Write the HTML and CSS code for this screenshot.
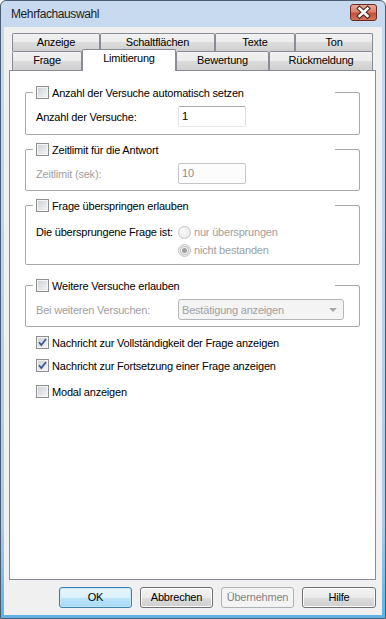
FILE: index.html
```html
<!DOCTYPE html>
<html lang="de">
<head>
    <meta charset="UTF-8">
    <title>Mehrfachauswahl</title>
    <link rel="stylesheet" href="styles.css">
</head>
<body>
    <div class="window">
        <div class="titlebar">
            <span class="title">Mehrfachauswahl</span>
            <div class="close-btn">
                <svg width="27" height="17" viewBox="0 0 27 17">
                    <path d="M9.5 4.5 L17.5 12 M17.5 4.5 L9.5 12" stroke="#4b1f1a" stroke-width="4.6" stroke-linecap="square"/>
                    <path d="M9.5 4.5 L17.5 12 M17.5 4.5 L9.5 12" stroke="#ffffff" stroke-width="2.6" stroke-linecap="square"/>
                </svg>
            </div>
        </div>

        <div class="client">
            <!-- Reiter in zwei Reihen -->
            <div class="tabs">
                <div class="tab-row">
                    <div class="tab w-anzeige">Anzeige</div>
                    <div class="tab w-schalt">Schaltflächen</div>
                    <div class="tab w-texte">Texte</div>
                    <div class="tab w-ton">Ton</div>
                </div>
                <div class="tab-row front">
                    <div class="tab w-frage">Frage</div>
                    <div class="tab w-limit active">Limitierung</div>
                    <div class="tab w-bewert">Bewertung</div>
                    <div class="tab w-rueck">Rückmeldung</div>
                </div>
            </div>

            <div class="panel">
                <div class="group g-first">
                    <div class="legend"><span class="cb"></span>Anzahl der Versuche automatisch setzen</div>
                    <div class="field-row">
                        <span class="field-label">Anzahl der Versuche:</span>
                        <div class="textbox">1</div>
                    </div>
                </div>

                <div class="group g-second">
                    <div class="legend"><span class="cb"></span>Zeitlimit für die Antwort</div>
                    <div class="field-row disabled">
                        <span class="field-label">Zeitlimit (sek):</span>
                        <div class="textbox">10</div>
                    </div>
                </div>

                <div class="group g-third">
                    <div class="legend"><span class="cb"></span>Frage überspringen erlauben</div>
                    <div class="radio-block">
                        <span class="field-label">Die übersprungene Frage ist:</span>
                        <div class="radios">
                            <div class="radio-row"><span class="rb"></span>nur übersprungen</div>
                            <div class="radio-row"><span class="rb checked"><span class="dot"></span></span>nicht bestanden</div>
                        </div>
                    </div>
                </div>

                <div class="group g-fourth">
                    <div class="legend"><span class="cb"></span>Weitere Versuche erlauben</div>
                    <div class="field-row disabled">
                        <span class="field-label">Bei weiteren Versuchen:</span>
                        <div class="combo">Bestätigung anzeigen<span class="arrow"></span></div>
                    </div>
                </div>

                <div class="check-row r1">
                    <span class="cb">
                        <svg width="11" height="11" viewBox="0 0 11 11"><path d="M2 5.2 L4.3 8 L9 2" fill="none" stroke="#3d5a8f" stroke-width="1.8"/></svg>
                    </span>Nachricht zur Vollständigkeit der Frage anzeigen
                </div>
                <div class="check-row r2">
                    <span class="cb">
                        <svg width="11" height="11" viewBox="0 0 11 11"><path d="M2 5.2 L4.3 8 L9 2" fill="none" stroke="#3d5a8f" stroke-width="1.8"/></svg>
                    </span>Nachricht zur Fortsetzung einer Frage anzeigen
                </div>
                <div class="check-row r3"><span class="cb"></span>Modal anzeigen</div>
            </div>

            <div class="buttons">
                <div class="btn default">OK</div>
                <div class="btn">Abbrechen</div>
                <div class="btn disabled">Übernehmen</div>
                <div class="btn hilfe">Hilfe</div>
            </div>
        </div>
    </div>
</body>
</html>
```

FILE: styles.css
```css
body {
    margin: 0;
    font-family: "Liberation Sans", Arial, sans-serif;
    font-size: 11px;
    letter-spacing: -0.2px;
    color: #000;
}

.window {
    box-sizing: border-box;
    width: 386px;
    height: 619px;
    border: 1px solid #4b5d73;
    border-radius: 6px 6px 0 0;
    background: linear-gradient(to bottom, #c8daef 0%, #bcd2eb 40%, #a9cbe9 85%, #5fb2e4 100%);
    padding: 0 3px 3px;
    display: flex;
    flex-direction: column;
}

.titlebar {
    height: 26px;
    flex: none;
    display: flex;
    justify-content: space-between;
    align-items: flex-start;
    padding: 0 5px 0 7px;
}

.title {
    font-size: 12px;
    letter-spacing: -0.4px;
    line-height: 26px;
    color: #1e1e1e;
}

.close-btn {
    margin-top: 3px;
    width: 27px;
    height: 17px;
    box-sizing: border-box;
    border: 1px solid #6b2b25;
    border-radius: 3px;
    background: linear-gradient(to bottom, #e9a99a 0%, #d9826e 45%, #c7503a 55%, #d1765f 100%);
    display: flex;
    align-items: center;
    justify-content: center;
}

.close-btn svg {
    display: block;
    margin: -1px;
}

.client {
    flex: 1;
    background: #f0f0f0;
    display: flex;
    flex-direction: column;
    padding: 6px 6px 7px 5px;
}

/* Reiter */
.tabs {
    margin-left: 3px;
}

.tab-row {
    display: flex;
    height: 18px;
}

.tab-row.front {
    height: 19px;
}

.tab {
    box-sizing: border-box;
    border: 1px solid #898c95;
    border-bottom: none;
    border-radius: 2px 2px 0 0;
    background: linear-gradient(to bottom, #f2f2f2 0%, #ebebeb 50%, #dddddd 50%, #cfcfcf 100%);
    text-align: center;
    padding-top: 2px;
    height: 100%;
}

.tab.active {
    position: relative;
    z-index: 1;
    background: #fff;
    margin-top: -2px;
    height: 22px;
    margin-bottom: -1px;
    padding-top: 2px;
}

.w-anzeige { width: 88px; }
.w-schalt { width: 115px; }
.w-texte { width: 80px; }
.w-ton { width: 78px; }
.w-frage { width: 70px; }
.w-limit { width: 94px; }
.w-bewert { width: 93px; }
.w-rueck { width: 104px; }

.panel {
    flex: 1;
    border: 1px solid #898c95;
    background: #fff;
    padding-left: 15px;
}

/* Gruppenrahmen */
.group {
    box-sizing: border-box;
    width: 335px;
    border: 1px solid #a9a9a9;
    border-radius: 2px;
}

.g-first { margin-top: 21px; padding-bottom: 7px; }
.g-second { margin-top: 14px; padding-bottom: 6px; }
.g-third { margin-top: 14px; padding-bottom: 5px; }
.g-fourth { margin-top: 20px; padding-bottom: 6px; }

.legend {
    display: flex;
    align-items: center;
    height: 13px;
    margin-top: -7px;
    margin-left: 7px;
    width: 302px;
    box-sizing: border-box;
    padding-left: 3px;
    background: #fff;
    gap: 3px;
}

.cb {
    box-sizing: border-box;
    width: 13px;
    height: 13px;
    flex: none;
    border: 1px solid #8f8f8f;
    box-shadow: inset 0 0 0 1px #f4f4f4;
    background: linear-gradient(135deg, #cbd0d6 0%, #f7f7f7 100%);
    display: flex;
    align-items: center;
    justify-content: center;
}

.field-row {
    display: flex;
    align-items: center;
    margin-top: 7px;
    padding-left: 10px;
    height: 21px;
}

.field-label {
    width: 142px;
    flex: none;
}

.textbox {
    box-sizing: border-box;
    width: 68px;
    height: 21px;
    border: 1px solid;
    border-color: #abadb3 #dbdfe6 #e3e9ef #e2e3ea;
    border-radius: 2px;
    background: #fff;
    padding-left: 3px;
    line-height: 19px;
}

.disabled .field-label {
    color: #a0a0a0;
}

.disabled .textbox {
    border-color: #c6c6c6;
    background: #fcfcfc;
    color: #8d8d8d;
}

.radio-block {
    display: flex;
    margin-top: 11px;
    padding-left: 10px;
}

.radio-block .field-label {
    line-height: 18px;
}

.radio-row {
    display: flex;
    align-items: center;
    height: 18px;
    gap: 3px;
    color: #a0a0a0;
}

.rb {
    box-sizing: border-box;
    width: 13px;
    height: 13px;
    border-radius: 50%;
    border: 1px solid #c4c4c4;
    background: radial-gradient(circle at 40% 40%, #fbfbfb 0%, #e4e4e4 100%);
    display: flex;
    align-items: center;
    justify-content: center;
}

.rb .dot {
    width: 5px;
    height: 5px;
    border-radius: 50%;
    background: #9d9d9d;
    box-shadow: 0 0 0 1px #f6f6f6, 0 0 0 2px #bdbdbd;
}

.combo {
    box-sizing: border-box;
    width: 166px;
    height: 21px;
    border: 1px solid #b3b7ba;
    border-radius: 3px;
    background: #f4f4f4;
    color: #a0a0a0;
    padding-left: 3px;
    display: flex;
    align-items: center;
}

.combo .arrow {
    margin-left: auto;
    margin-right: 6px;
    width: 0;
    height: 0;
    border-left: 4px solid transparent;
    border-right: 4px solid transparent;
    border-top: 4px solid #a8a8a8;
}

.check-row {
    display: flex;
    align-items: center;
    gap: 3px;
    height: 17px;
    padding-left: 11px;
}

.r1 { margin-top: 7px; }
.r2 { margin-top: 6px; }
.r3 { margin-top: 9px; }

.check-row svg {
    display: block;
}

/* Schaltflaechen unten */
.buttons {
    display: flex;
    justify-content: flex-end;
    gap: 8px;
    margin-top: 7px;
    height: 21px;
}

.btn {
    box-sizing: border-box;
    width: 73px;
    height: 21px;
    border: 1px solid #707070;
    border-radius: 3px;
    background: linear-gradient(to bottom, #f2f2f2 0%, #ebebeb 50%, #dddddd 50%, #cfcfcf 100%);
    box-shadow: inset 0 0 0 1px #fcfcfc;
    text-align: center;
    line-height: 19px;
}

.btn.default {
    border-color: #3c7fb1;
    background: linear-gradient(to bottom, #eaf6fd 0%, #d9f0fc 50%, #bee6fd 50%, #a7d9f5 100%);
    box-shadow: inset 0 0 0 1px #c5e6f9;
}

.btn.disabled {
    border-color: #adb2b5;
    background: #f4f4f4;
    box-shadow: none;
    color: #838383;
}

.btn.hilfe {
    width: 74px;
}
```
